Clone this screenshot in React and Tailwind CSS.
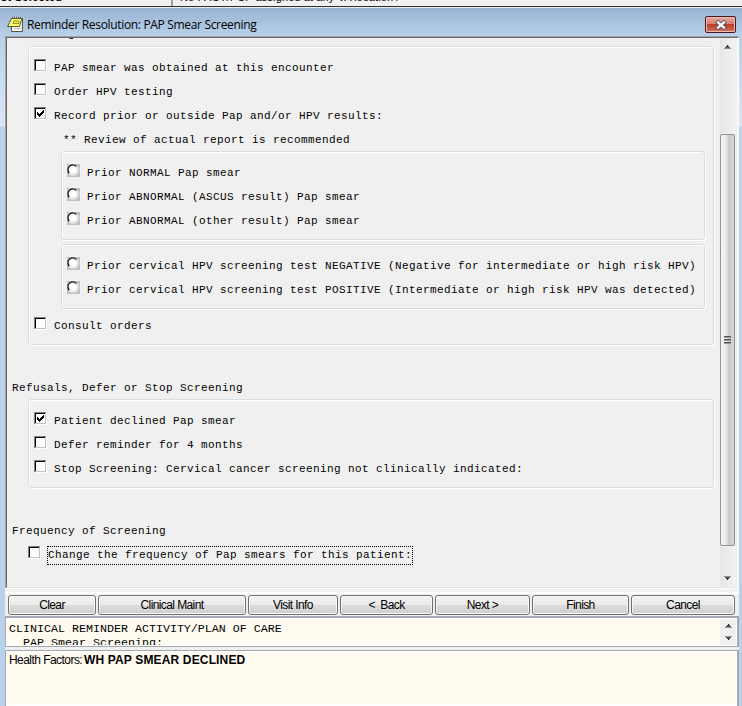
import React from "react";

function Box({ checked }) {
  return (
    <svg width="13" height="13" viewBox="0 0 13 13" shapeRendering="crispEdges" className="mt-[4px] shrink-0">
      <rect width="12" height="12" fill="#808080" />
      <rect x="1" y="1" width="12" height="12" fill="#ffffff" />
      <rect x="1" y="1" width="11" height="11" fill="#c0c0c0" />
      <rect x="1" y="1" width="10" height="10" fill="#000000" />
      <rect x="2" y="2" width="9" height="9" fill="#ffffff" />
      {checked && <path d="M3 5h1v1h1v1h1v-1h1v-1h1v-1h1v-1h1v3h-1v1h-1v1h-1v1h-1v1h-1v-1h-1v-1h-1z" fill="#000" />}
    </svg>
  );
}

function Radio() {
  return (
    <svg width="13" height="13" viewBox="0 0 13 13" className="mt-[4px] shrink-0">
      <rect width="13" height="13" fill="#c0c0c0" />
      <circle cx="6" cy="6" r="5.8" fill="#fff" />
      <path d="M2 10A5.6 5.6 0 0 1 10 2" fill="none" stroke="#808080" strokeWidth="0.8" />
      <path d="M2.3 9A4.7 4.7 0 0 1 9.2 2.5" fill="none" stroke="#000" strokeWidth="1.1" />
      <path d="M9.6 3A4.7 4.7 0 0 1 3 9.6" fill="none" stroke="#c4c4c4" strokeWidth="0.8" />
    </svg>
  );
}

function Check({ checked, children }) {
  return (
    <div className="flex h-6">
      <Box checked={checked} />
      <span className="ml-[7px] leading-[27px]">{children}</span>
    </div>
  );
}

function Option({ children }) {
  return (
    <div className="flex h-6">
      <Radio />
      <span className="ml-[7px] leading-[27px]">{children}</span>
    </div>
  );
}

const group = "rounded-[3px] border border-[#d5dfe5] shadow-[inset_1px_1px_0_#fff,1px_1px_0_#fff]";

function Arrow({ down }) {
  return (
    <svg width="7" height="4" viewBox="0 0 7 4" shapeRendering="crispEdges" className={down ? "rotate-180" : ""}>
      <rect x="3" y="0" width="1" height="1" fill="#222" />
      <rect x="2" y="1" width="3" height="1" fill="#333" />
      <rect x="1" y="2" width="5" height="1" fill="#606060" />
      <rect x="0" y="3" width="7" height="1" fill="#8c8c8c" />
    </svg>
  );
}

function NoteIcon() {
  return (
    <svg width="17" height="17" viewBox="0 0 17 17" className="shrink-0">
      <path d="M4.5 1.5h11v14h-11z" fill="#f5f5ea" />
      <path d="M15.5 2v13.5h-11V10" fill="none" stroke="#55554a" />
      <path d="M7 12.5h7" stroke="#bbb" />
      <path d="M4.5 2.5h10.5l-2.5 8H.6z" fill="#ffff66" stroke="#444430" strokeWidth="0.9" />
      <path d="M6.5 5h5.5v2.5H6z" fill="#f4f450" stroke="#77772c" strokeWidth="0.8" />
      <path d="M5.5.8v1.4M7.5.8v1.4M9.5.8v1.4M11.5.8v1.4M13.5.8v1.4" stroke="#555" />
    </svg>
  );
}

function Button({ className, children }) {
  return (
    <button
      className={
        "h-5 shrink-0 rounded-[3px] border border-[#707070] bg-[linear-gradient(#f2f2f2_0%,#ebebeb_50%,#dddddd_51%,#cfcfcf_100%)] text-center text-[12px] leading-[18px] tracking-[-0.6px] whitespace-pre shadow-[inset_0_0_0_1px_#f8f8f8] " +
        className
      }
    >
      {children}
    </button>
  );
}

export default function App() {
  return (
    <div className="flex h-[706px] w-[742px] flex-col overflow-hidden bg-[#b9d1ea] font-['Liberation_Sans',Arial,sans-serif] text-black">
      <div className="flex h-[6px] shrink-0 overflow-hidden bg-[#f0f0f0] text-[11px] leading-[12px]">
        <div className="-mt-[9px] h-[15px] w-[173px] shrink-0 border-r-2 border-[#a0a0a0] pl-px font-bold tracking-[0.3px]">st Selected</div>
        <div className="-mt-[9px] pl-[7px] whitespace-nowrap tracking-[0.12px]">No PACT/PCP assigned at any VA location /</div>
      </div>
      <div className="h-px shrink-0 bg-[#30302c]" />
      <div className="h-px shrink-0 bg-[#e4edf5]" />
      <div className="flex h-[28px] shrink-0 bg-linear-to-b from-[#98b3d1] to-[#b9d1ea] pr-[6px] pl-[7px]">
        <div className="mt-[8px] h-[17px]"><NoteIcon /></div>
        <div className="mt-[9px] ml-[3px] font-['Open_Sans',sans-serif] text-[12px] leading-[16px] tracking-[-0.33px] whitespace-nowrap">
          Reminder Resolution: PAP Smear Screening
        </div>
        <div className="mt-[8px] ml-auto flex h-[17px] w-[31px] items-center justify-center rounded-[2px] border border-[#481823] bg-[linear-gradient(#e6a99e_0%,#d67c6c_48%,#b83c26_50%,#d3735f_100%)] shadow-[inset_0_0_0_1px_#eebbb0]">
          <svg width="12" height="10" viewBox="0 0 12 10">
            <path d="M3 2.4L9 7.6M9 2.4L3 7.6" stroke="#535666" strokeWidth="4" strokeLinecap="square" />
            <path d="M3 2.4L9 7.6M9 2.4L3 7.6" stroke="#fff" strokeWidth="2.2" strokeLinecap="square" />
          </svg>
        </div>
      </div>

      <div className="flex min-h-0 flex-1 bg-[linear-gradient(#b9d1ea_0px,#dbe8f6_90px,#b9d1ea_91px)]">
        <div className="ml-[5px] flex w-[734px] flex-col bg-[#f0f0f0]">
          <div className="flex h-[552px] shrink-0 border-t border-l border-[#a0a0a0]">
            <div className="flex w-full border-t border-r-2 border-b border-l border-t-[#696969] border-r-[#fafafa] border-b-[#e3e3e3] border-l-[#696969]">
              <div className="flex w-[713px] shrink-0 flex-col pl-[5px] font-['Liberation_Mono','Courier_New',monospace] text-[11px] tracking-[0.399px] whitespace-pre">
                <div className="h-[8px] overflow-hidden">
                  <div className="-mt-[10px] leading-[12px]">Screening</div>
                </div>
                <div className={"ml-[16px] h-[299px] w-[686px] pt-[8px] pl-[5px] " + group}>
                  <Check>PAP smear was obtained at this encounter</Check>
                  <Check>Order HPV testing</Check>
                  <Check checked>Record prior or outside Pap and/or HPV results:</Check>
                  <div className="h-6 pl-[29px] leading-[27px]">** Review of actual report is recommended</div>
                  <div className={"ml-[27px] h-[89px] w-[644px] pt-[8px] pl-[5px] " + group}>
                    <Option>Prior NORMAL Pap smear</Option>
                    <Option>Prior ABNORMAL (ASCUS result) Pap smear</Option>
                    <Option>Prior ABNORMAL (other result) Pap smear</Option>
                  </div>
                  <div className={"mt-[4px] ml-[27px] h-[65px] w-[644px] pt-[8px] pl-[5px] " + group}>
                    <Option>Prior cervical HPV screening test NEGATIVE (Negative for intermediate or high risk HPV)</Option>
                    <Option>Prior cervical HPV screening test POSITIVE (Intermediate or high risk HPV was detected)</Option>
                  </div>
                  <div className="mt-[4px]"><Check>Consult orders</Check></div>
                </div>
                <div className="mt-[30px] h-6 leading-[27px]">Refusals, Defer or Stop Screening</div>
                <div className={"ml-[16px] h-[89px] w-[686px] pt-[8px] pl-[5px] " + group}>
                  <Check checked>Patient declined Pap smear</Check>
                  <Check>Defer reminder for 4 months</Check>
                  <Check>Stop Screening: Cervical cancer screening not clinically indicated:</Check>
                </div>
                <div className="mt-[30px] h-6 leading-[27px]">Frequency of Screening</div>
                <div className="ml-[16px] flex h-6">
                  <Box />
                  <span className="mt-[4px] ml-[6px] h-[19px] w-[366px] border border-dotted border-black leading-[17px]">Change the frequency of Pap smears for this patient:</span>
                </div>
              </div>
              <div className="flex w-[15px] shrink-0 flex-col items-center bg-linear-to-r from-[#e6e6e6] to-[#f2f2f2]">
                <div className="flex h-[96px] shrink-0 pt-[7px]"><Arrow /></div>
                <div className="flex h-[412px] w-[15px] shrink-0 flex-col items-center justify-center gap-px rounded-[2px] border border-[#929292] bg-[linear-gradient(90deg,#f5f5f5_0%,#e7e7e9_45%,#c9c9cd_55%,#d6d6da_100%)]">
                  <div className="h-[2px] w-[7px] border-t border-[#555] bg-[#999]" />
                  <div className="h-[2px] w-[7px] border-t border-[#555] bg-[#999]" />
                  <div className="h-[2px] w-[7px] border-t border-[#555] bg-[#999]" />
                </div>
                <div className="mt-[30px] flex"><Arrow down /></div>
              </div>
            </div>
          </div>

          <div className="h-[4px] shrink-0 border-t border-white" />
          <div className="flex h-[24px] shrink-0 gap-[2px] border-t-2 border-white pt-px pl-[3px]">
            <Button className="w-[88px]">Clear</Button>
            <Button className="w-[148px]">Clinical Maint</Button>
            <Button className="w-[90px]">Visit Info</Button>
            <Button className="w-[93px]">{"<  Back"}</Button>
            <Button className="w-[95px]">{"Next >"}</Button>
            <Button className="w-[97px]">Finish</Button>
            <Button className="w-[104px]">Cancel</Button>
          </div>

          <div className="flex h-[31px] shrink-0 border-t-2 border-r-2 border-b border-l border-[#a5a7ae] bg-[#fffbf0] shadow-[inset_0_0_0_1px_#fff]">
            <div className="ml-[3px] h-[27px] flex-1 overflow-hidden pt-[4px] font-['Liberation_Mono','Courier_New',monospace] text-[11.67px] leading-[14px] whitespace-pre">
              <div>CLINICAL REMINDER ACTIVITY/PLAN OF CARE</div>
              <div>{"  PAP Smear Screening:"}</div>
            </div>
            <div className="mt-px mr-px flex h-[26px] w-[16px] flex-col items-center justify-between bg-[#f0f0f0] pt-[5px] pb-[5px]">
              <Arrow />
              <Arrow down />
            </div>
          </div>
          <div className="h-[3px] shrink-0" />
          <div className="flex flex-1 border-t border-r-2 border-l border-[#a5a7ae] bg-[#fffbf0] pt-[2px] pl-[3px] text-[12px] leading-[14px] whitespace-nowrap shadow-[inset_0_0_0_1px_#fff]">
            <span className="w-[75px] tracking-[-0.55px]">Health Factors:</span>
            <span className="font-bold tracking-[0.15px]">WH PAP SMEAR DECLINED</span>
          </div>
        </div>
      </div>
    </div>
  );
}
